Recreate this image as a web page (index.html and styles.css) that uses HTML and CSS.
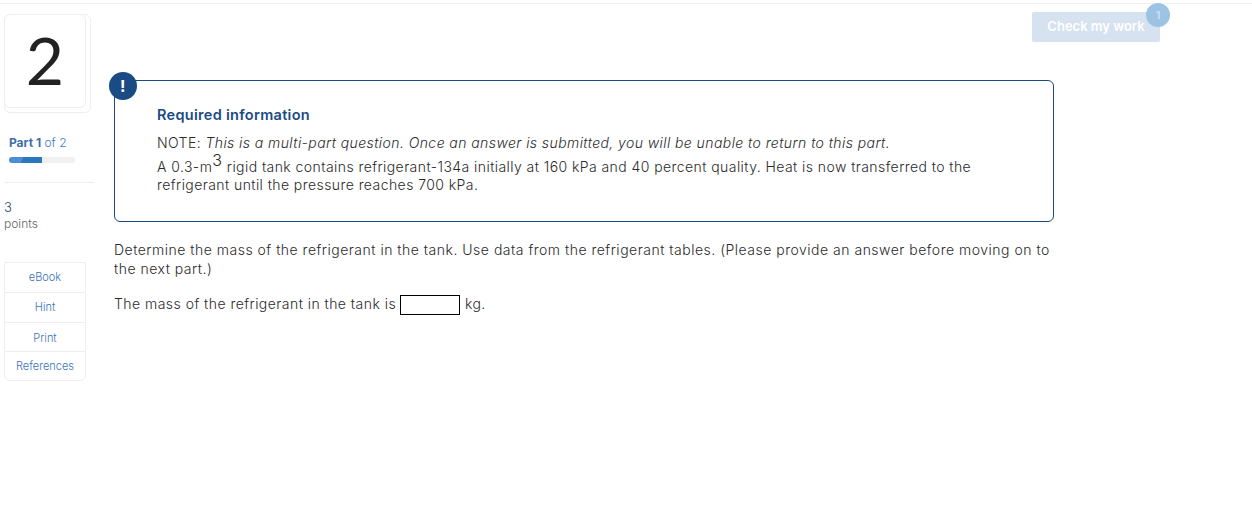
FILE: index.html
```html
<!DOCTYPE html>
<html>
<head>
  <title>Question 2</title>
  <link rel="stylesheet" href="styles.css">
</head>
<body>
  <div class="top-line"></div>
  <div class="page">
    <div class="sidebar">
      <div class="number-card">
        <div class="number-face">2</div>
      </div>
      <div class="part-label"><b>Part 1</b> of 2</div>
      <div class="progress"><div class="progress-fill"></div></div>
      <div class="points">
        <div class="points-num">3</div>
        <div class="points-label">points</div>
      </div>
      <div class="tools">
        <a class="tool">eBook</a>
        <a class="tool">Hint</a>
        <a class="tool tool-short">Print</a>
        <a class="tool tool-short">References</a>
      </div>
    </div>

    <div class="main">
      <div class="info-box">
        <div class="info-icon">!</div>
        <div class="info-title">Required information</div>
        <p class="info-note">NOTE: <i>This is a multi-part question. Once an answer is submitted, you will be unable to return to this part.</i></p>
        <p class="info-text">A 0.3-m<sup>3</sup> rigid tank contains refrigerant-134a initially at 160 kPa and 40 percent quality. Heat is now transferred to the refrigerant until the pressure reaches 700 kPa.</p>
      </div>
      <p class="question">Determine the mass of the refrigerant in the tank. Use data from the refrigerant tables. (Please provide an answer before moving on to the next part.)</p>
      <p class="answer">The mass of the refrigerant in the tank is <input class="answer-input" type="text"> kg.</p>
    </div>

    <div class="actions">
      <button class="check-btn">Check my work</button>
      <span class="check-badge">1</span>
    </div>
  </div>
</body>
</html>
```

FILE: styles.css
```css
body {
  margin: 0;
  padding: 0;
  background: #fff;
  color: #2b2b2b;
  font-family: "Inter", "Liberation Sans", sans-serif;
  font-size: 14px;
  font-weight: 350;
}

.top-line {
  height: 3px;
  border-bottom: 1px solid #f0f0f0;
}

.page {
  display: flex;
  align-items: flex-start;
}

.sidebar {
  width: 90px;
  margin-left: 4px;
  flex-shrink: 0;
  padding-top: 10px;
}

.number-card {
  width: 87px;
  height: 99px;
  border: 1px solid #eee;
  border-radius: 6px;
  box-sizing: border-box;
  position: relative;
}

.number-face {
  position: absolute;
  top: -1px;
  left: -1px;
  width: 82px;
  height: 94px;
  box-sizing: border-box;
  border: 1px solid #eee;
  border-radius: 6px;
  background: #fff;
  text-align: center;
  font-family: "Lato", sans-serif;
  font-size: 66px;
  font-weight: 400;
  line-height: 90px;
  color: #222;
}

.part-label {
  margin: 22px 0 0 5px;
  font-size: 12px;
  line-height: 16px;
  color: #3a78c0;
}

.part-label b {
  color: #3f6fa8;
}

.progress {
  width: 66px;
  height: 6px;
  margin: 6px 0 0 5px;
  border-radius: 3px;
  background: #f0f0f0;
  overflow: hidden;
}

.progress-fill {
  width: 33px;
  height: 6px;
  background: linear-gradient(115deg, #4a90d4 0, #4a90d4 40%, #2a78c0 40%);
}

.points {
  margin-top: 19px;
  padding-top: 16px;
  border-top: 1px solid #eee;
}

.points-num {
  font-size: 13px;
  line-height: 16px;
  color: #2b4a6e;
}

.points-label {
  font-size: 12px;
  line-height: 17px;
  color: #666;
}

.tools {
  width: 82px;
  margin-top: 30px;
  box-sizing: border-box;
  border: 1px solid #eee;
  border-radius: 0 0 6px 6px;
}

.tool {
  display: block;
  height: 30px;
  line-height: 29px;
  box-sizing: border-box;
  border-bottom: 1px solid #eee;
  text-align: center;
  font-size: 11px;
  color: #3a73b8;
}

.tool-short {
  height: 29px;
  line-height: 30px;
}

.tool:last-child {
  border-bottom: 0;
  height: 28px;
  line-height: 29px;
}

.main {
  width: 940px;
  margin-left: 20px;
  padding-top: 76px;
  flex-shrink: 0;
  letter-spacing: 0.46px;
}

.info-box {
  position: relative;
  box-sizing: border-box;
  height: 142px;
  padding: 24px 70px 0 42px;
  border: 1px solid #1a4b85;
  border-radius: 6px;
}

.info-icon {
  position: absolute;
  top: -9px;
  left: -6px;
  width: 28px;
  height: 28px;
  border-radius: 50%;
  background: #1a4b85;
  color: #fff;
  font-weight: bold;
  font-size: 16px;
  line-height: 28px;
  text-align: center;
}

.info-title {
  font-size: 14.5px;
  font-weight: 600;
  line-height: 20px;
  letter-spacing: 0.3px;
  color: #1a4b85;
}

.info-note {
  margin: 8px 0 0;
  line-height: 20px;
  letter-spacing: 0.42px;
}

.info-text {
  margin: 5px 0 0;
  line-height: 18px;
  letter-spacing: 0.43px;
}

.info-text sup {
  font-size: 16px;
  line-height: 0;
  vertical-align: 6px;
}

.question {
  margin: 18px 0 0;
  line-height: 19px;
  letter-spacing: 0.5px;
}

.answer {
  margin: 16px 0 0;
  line-height: 19px;
}

.answer-input {
  width: 60px;
  height: 20px;
  padding: 0;
  box-sizing: border-box;
  border: 1px solid #000;
  vertical-align: middle;
}

.actions {
  position: relative;
  margin-left: -22px;
  padding-top: 8px;
}

.check-btn {
  width: 128px;
  height: 30px;
  padding: 0 0 2px;
  border: 0;
  border-radius: 2px;
  background: #d6e2f0;
  color: #fff;
  font-family: inherit;
  font-size: 13px;
  font-weight: 600;
}

.check-badge {
  position: absolute;
  top: -1px;
  right: -10px;
  width: 24px;
  height: 24px;
  border-radius: 50%;
  background: #9cc3e3;
  color: #c9dff0;
  font-size: 11px;
  font-weight: bold;
  line-height: 24px;
  text-align: center;
}
```
